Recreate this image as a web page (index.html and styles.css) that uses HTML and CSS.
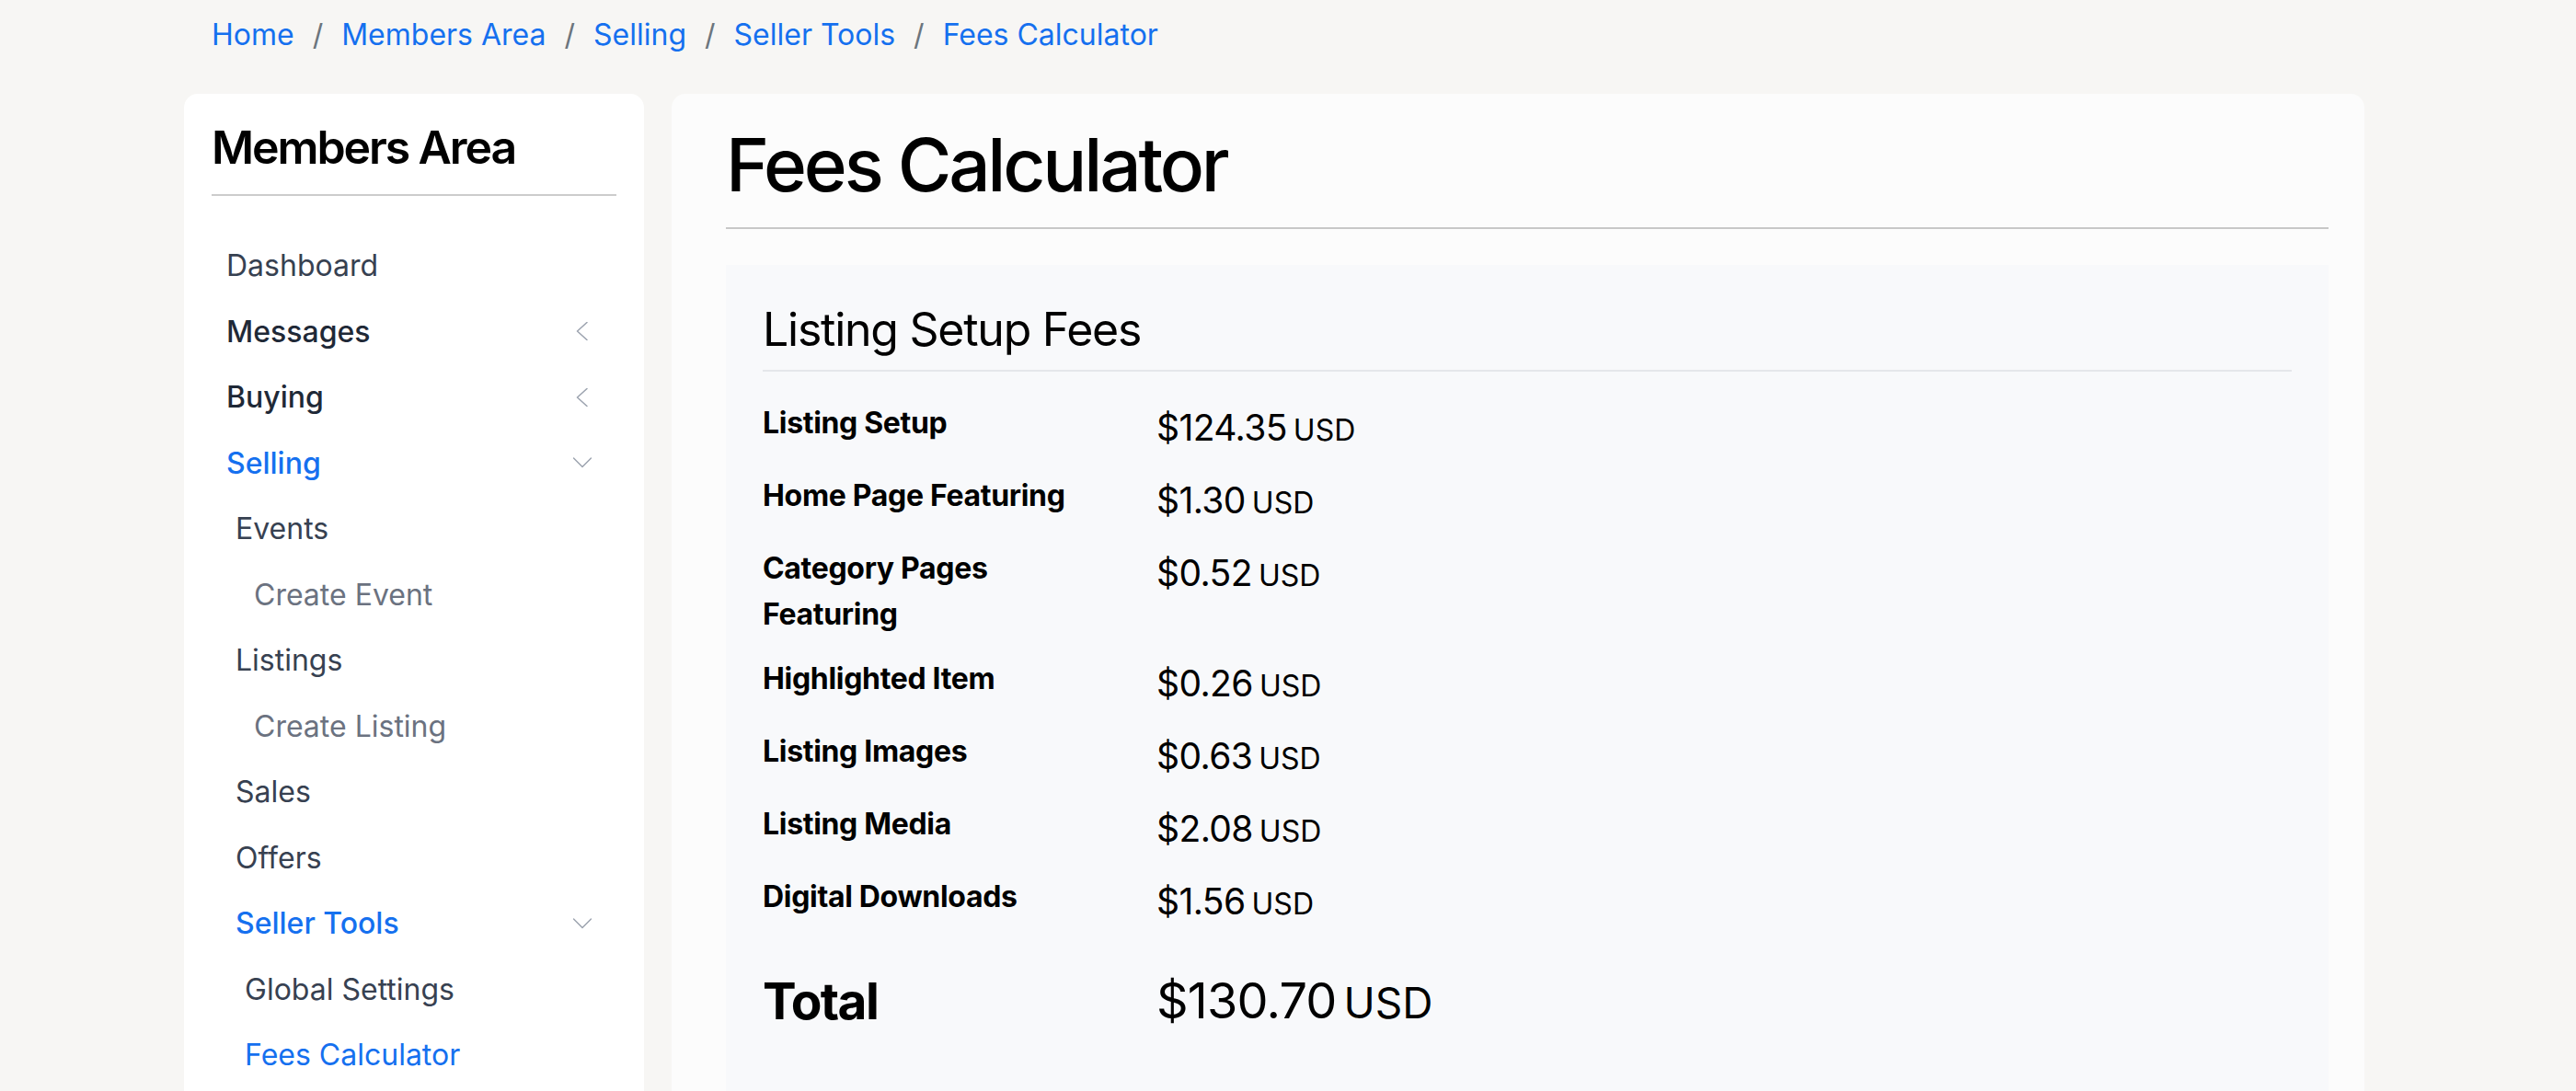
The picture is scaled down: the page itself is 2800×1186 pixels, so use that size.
FILE: index.html
```html
<!DOCTYPE html>
<html lang="en">
<head>
<meta charset="utf-8">
<title>Fees Calculator</title>
<link rel="stylesheet" href="styles.css">
</head>
<body>
<div class="container">
  <nav class="crumbs">
    <ol>
      <li><a href="#">Home</a></li>
      <li><a href="#">Members Area</a></li>
      <li><a href="#">Selling</a></li>
      <li><a href="#">Seller Tools</a></li>
      <li><a href="#">Fees Calculator</a></li>
    </ol>
  </nav>
  <div class="layout">
    <aside class="side-card">
      <h3 class="side-title">Members Area</h3>
      <ul class="side-nav">
        <li class="nav-item lvl0 plain"><span>Dashboard</span></li>
        <li class="nav-item lvl0 strong"><span>Messages</span>
          <svg class="chev" viewBox="0 0 20 20"><path d="M15 0.5 L4.5 10 L15 19.5"/></svg></li>
        <li class="nav-item lvl0 strong"><span>Buying</span>
          <svg class="chev" viewBox="0 0 20 20"><path d="M15 0.5 L4.5 10 L15 19.5"/></svg></li>
        <li class="nav-item lvl0 strong active"><span>Selling</span>
          <svg class="chev" viewBox="0 0 20 20"><path d="M0.5 5 L10 14.5 L19.5 5"/></svg></li>
        <li class="nav-item lvl1 plain"><span>Events</span></li>
        <li class="nav-item lvl3 muted"><span>Create Event</span></li>
        <li class="nav-item lvl1 plain"><span>Listings</span></li>
        <li class="nav-item lvl3 muted"><span>Create Listing</span></li>
        <li class="nav-item lvl1 plain"><span>Sales</span></li>
        <li class="nav-item lvl1 plain"><span>Offers</span></li>
        <li class="nav-item lvl1 strong active"><span>Seller Tools</span>
          <svg class="chev" viewBox="0 0 20 20"><path d="M0.5 5 L10 14.5 L19.5 5"/></svg></li>
        <li class="nav-item lvl2 plain"><span>Global Settings</span></li>
        <li class="nav-item lvl2 current"><span>Fees Calculator</span></li>
      </ul>
    </aside>
    <main class="main-card">
      <h1 class="page-title">Fees Calculator</h1>
      <section class="fees">
        <h2 class="fees-title">Listing Setup Fees</h2>
        <div class="fee-grid">
          <div class="fee-label">Listing Setup</div>
          <div class="fee-value"><span class="amt">$124.35</span><span class="cur">USD</span></div>
          <div class="fee-label">Home Page Featuring</div>
          <div class="fee-value"><span class="amt">$1.30</span><span class="cur">USD</span></div>
          <div class="fee-label">Category Pages Featuring</div>
          <div class="fee-value"><span class="amt">$0.52</span><span class="cur">USD</span></div>
          <div class="fee-label">Highlighted Item</div>
          <div class="fee-value"><span class="amt">$0.26</span><span class="cur">USD</span></div>
          <div class="fee-label">Listing Images</div>
          <div class="fee-value"><span class="amt">$0.63</span><span class="cur">USD</span></div>
          <div class="fee-label">Listing Media</div>
          <div class="fee-value"><span class="amt">$2.08</span><span class="cur">USD</span></div>
          <div class="fee-label">Digital Downloads</div>
          <div class="fee-value"><span class="amt">$1.56</span><span class="cur">USD</span></div>
          <div class="fee-label total">Total</div>
          <div class="fee-value total"><span class="amt">$130.70</span><span class="cur">USD</span></div>
        </div>
      </section>
    </main>
  </div>
</div>
</body>
</html>
```
FILE: styles.css
```css
* { box-sizing: border-box; }

html, body {
  margin: 0;
  padding: 0;
  background: #f7f6f4;
  font-family: Inter, "Noto Sans", "Liberation Sans", sans-serif;
  color: #000;
}

.container {
  width: 2400px;
  margin: 0 auto;
  padding-top: 14px;
}

/* Breadcrumb */
.crumbs ol {
  display: flex;
  list-style: none;
  margin: 0;
  padding: 0 0 0 30px;
  font-size: 32px;
  line-height: 48px;
}
.crumbs li + li::before {
  content: "/";
  color: #6c757d;
  padding: 0 20px;
}
.crumbs a {
  color: #1570ef;
  text-decoration: none;
}

/* Layout */
.layout {
  display: grid;
  grid-template-columns: 500px 1840px;
  column-gap: 30px;
  margin-top: 40px;
  align-items: start;
}

/* Sidebar */
.side-card {
  background: #ffffff;
  border-radius: 15px;
  padding: 28px 30px 40px;
}
.side-title {
  margin: 0;
  font-size: 50px;
  line-height: 60px;
  font-weight: 600;
  letter-spacing: -0.042em;
  padding-bottom: 21px;
  border-bottom: 2px solid #cccccc;
}
.side-nav {
  list-style: none;
  margin: 40px 0 0;
  padding: 0;
}
.nav-item {
  display: flex;
  align-items: center;
  justify-content: space-between;
  padding: 12px 27px 12px 16px;
  font-size: 32px;
  line-height: 47.5px;
}
.nav-item.lvl1 { padding-left: 26px; }
.nav-item.lvl2 { padding-left: 36px; }
.nav-item.lvl3 { padding-left: 46px; }
.nav-item.plain { color: #374151; }
.nav-item.strong { color: #1f2937; font-weight: 500; }
.nav-item.muted { color: #6b7280; }
.nav-item.active { color: #1570ef; }
.nav-item.current { color: #1570ef; }

.chev {
  width: 20px;
  height: 20px;
  flex: none;
  fill: none;
  stroke: #9ca3af;
  stroke-width: 1.5;
  stroke-linecap: round;
  stroke-linejoin: round;
}

/* Main card */
.main-card {
  background: #fcfcfc;
  border-radius: 15px;
  padding: 29px 39px 0 59px;
}
.page-title {
  margin: 0 0 39px;
  font-size: 80px;
  line-height: 96px;
  font-weight: 500;
  letter-spacing: -0.04em;
  padding-bottom: 20px;
  border-bottom: 2px solid #c8c8c8;
}

.fees {
  background: #f8f9fb;
  padding: 40px 40px 90px;
}
.fees-title {
  margin: 0;
  font-size: 50px;
  line-height: 60px;
  font-weight: 400;
  letter-spacing: -0.025em;
  padding-bottom: 14px;
  border-bottom: 2px solid #e5e7eb;
}

.fee-grid {
  display: grid;
  grid-template-columns: 380px 1fr;
  column-gap: 48px;
  row-gap: 20px;
  margin-top: 31px;
}
.fee-label {
  font-size: 32px;
  line-height: 50px;
  font-weight: 700;
  letter-spacing: -0.01em;
}
.fee-value {
  font-size: 39px;
  line-height: 59px;
  letter-spacing: -0.015em;
}
.fee-value span { line-height: 1; }
.fee-value .cur {
  font-size: 32px;
  margin-left: 7px;
  letter-spacing: 0;
}
.fee-label.total {
  margin-top: 18px;
  font-size: 55px;
  line-height: 82px;
  letter-spacing: -0.03em;
}
.fee-value.total {
  margin-top: 18px;
  font-size: 54px;
  line-height: 82px;
}
.fee-value.total .cur {
  font-size: 46px;
  margin-left: 8px;
}
```
